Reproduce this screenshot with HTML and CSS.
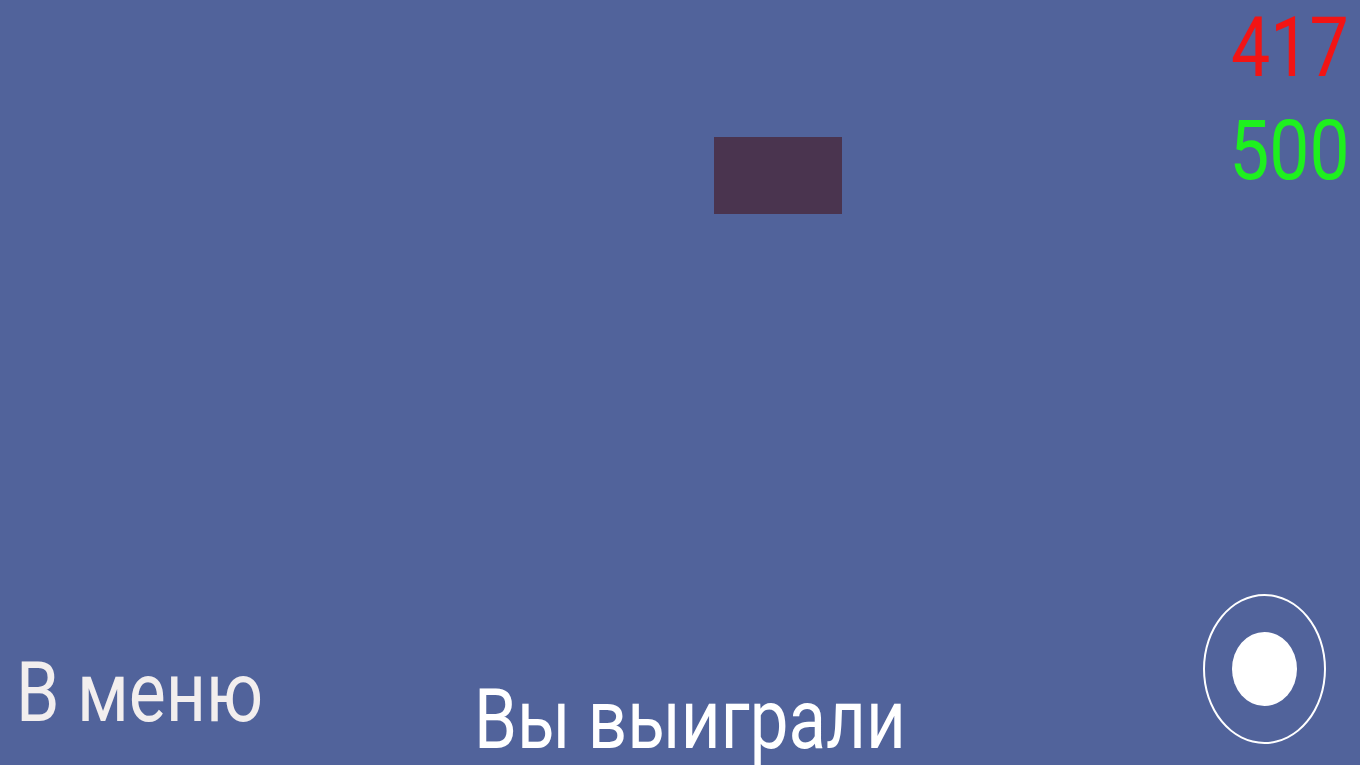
FILE: index.html
```html
<!DOCTYPE html>
<html lang="ru">
<head>
<meta charset="utf-8">
<link rel="stylesheet" href="styles.css">
</head>
<body>
<div class="stage">
  <div class="score score-red">417</div>
  <div class="score score-green">500</div>
  <div class="block"></div>
  <div class="menu-btn">В меню</div>
  <div class="result">Вы выиграли</div>
  <div class="joystick"><div class="knob"></div></div>
</div>
</body>
</html>
```
FILE: styles.css
```css
html, body {
  margin: 0;
  padding: 0;
  width: 1360px;
  height: 765px;
  overflow: hidden;
  background: #51639b;
}
.stage {
  position: relative;
  width: 1360px;
  height: 765px;
  background: #51639b;
  font-family: Roboto, "Liberation Sans", sans-serif;
}
.score {
  position: absolute;
  right: 11px;
  font-size: 84px;
  line-height: 1;
  transform: scaleX(0.83);
  transform-origin: right top;
}
.score-red { top: 6px; color: #f21414; }
.score-green { top: 109px; color: #1ef01e; right: 10px; transform: scaleX(0.85); }
.block {
  position: absolute;
  left: 714px;
  top: 137px;
  width: 128px;
  height: 77px;
  background: #4a344f;
}
.menu-btn {
  position: absolute;
  left: 16px;
  top: 651px;
  font-size: 83px;
  line-height: 1;
  color: #f2eeee;
  transform: scaleX(0.842);
  transform-origin: left top;
}
.result {
  position: absolute;
  left: 474px;
  top: 680px;
  font-size: 84px;
  line-height: 0.95;
  color: #ffffff;
  transform: scaleX(0.822);
  transform-origin: left top;
  white-space: nowrap;
}
.joystick {
  position: absolute;
  left: 1203px;
  top: 594px;
  width: 119px;
  height: 146px;
  border: 2px solid #ffffff;
  border-radius: 50%;
  display: flex;
  align-items: center;
  justify-content: center;
}
.knob {
  width: 65px;
  height: 74px;
  border-radius: 50%;
  background: #ffffff;
}
```
